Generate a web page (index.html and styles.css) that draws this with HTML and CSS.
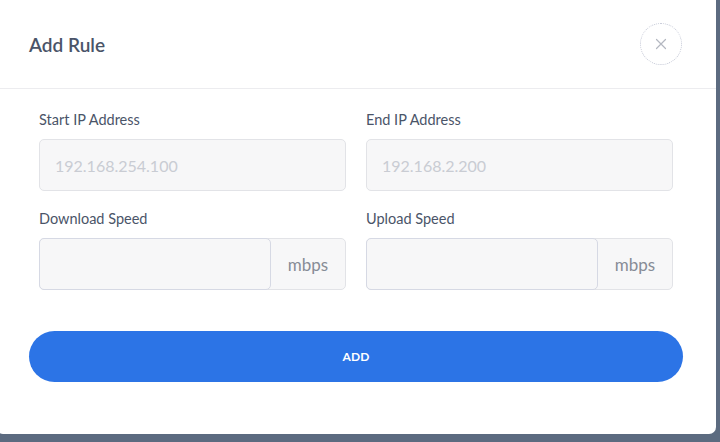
FILE: index.html
```html
<!DOCTYPE html>
<html lang="en">
  <head>
    <title>Add Rule</title>
    <link rel="stylesheet" href="styles.css">
  </head>
  <body>
    <div class="modal">
      <div class="modal-header">
        <h2>Add Rule</h2>
        <button class="close" aria-label="Close">
          <svg width="12" height="12" viewBox="0 0 12 12">
            <path d="M1.5 1.5 L10.5 10.5 M10.5 1.5 L1.5 10.5" stroke="#b3b7c0" stroke-width="1.2" fill="none" stroke-linecap="round"/>
          </svg>
        </button>
      </div>
      <form class="modal-body">
        <div class="fields">
          <div class="field">
            <label>Start IP Address</label>
            <input type="text" placeholder="192.168.254.100">
          </div>
          <div class="field">
            <label>End IP Address</label>
            <input type="text" placeholder="192.168.2.200">
          </div>
          <div class="field">
            <label>Download Speed</label>
            <div class="input-group">
              <input type="text">
              <span class="addon">mbps</span>
            </div>
          </div>
          <div class="field">
            <label>Upload Speed</label>
            <div class="input-group">
              <input type="text">
              <span class="addon">mbps</span>
            </div>
          </div>
        </div>
        <button type="button" class="submit">ADD</button>
      </form>
    </div>
  </body>
</html>
```

FILE: styles.css
```css
body {
  margin: 0;
  background-color: #5c6b80;
  font-family: "Lato", "Open Sans", sans-serif;
  height: 442px;
  overflow: hidden;
}
.modal {
  width: 720px;
  margin: -10px 0 0 -4px; /* dialog sits a little off the top-left */
  background-color: white;
  border-radius: 7px;
}
.modal-header {
  display: flex;
  align-items: center;
  justify-content: space-between;
  height: 99px;
  padding: 10px 33px 0 33px;
  box-sizing: border-box;
  border-bottom: 1px solid #ececef;
}
.modal-header h2 {
  margin: 0;
  font-size: 19px;
  font-weight: 600;
  color: #4a5468;
}
.close {
  width: 42px;
  height: 42px;
  border-radius: 50%;
  border: 1px dotted #c4c8d6;
  background: white;
  display: flex;
  align-items: center;
  justify-content: center;
  padding: 0;
  margin-right: 1px;
}
.modal-body {
  padding: 22px 33px 52px 33px;
}
.fields {
  display: grid;
  grid-template-columns: 1fr 1fr;
  column-gap: 20px;
  row-gap: 19px;
  padding: 0 10px;
}
.field label {
  display: block;
  font-size: 14.5px;
  line-height: 18px;
  color: #4a5468;
  margin-bottom: 10px;
}
.field input {
  width: 100%;
  height: 52px;
  box-sizing: border-box;
  border: 1px solid #e2e3e7;
  border-radius: 5px;
  background-color: #f7f7f8;
  padding: 0 15px;
  font-family: inherit;
  font-size: 16px;
}
.field input::placeholder {
  color: #c9ccd3;
}
.input-group {
  display: flex;
  border: 1px solid #e2e3e7;
  border-radius: 5px;
  background-color: #f7f7f8;
}
.input-group input {
  flex: 1;
  height: 52px;
  border-color: #d6d9e4;
  margin: -1px 0 -1px -1px;
}
.addon {
  width: 74px;
  display: flex;
  align-items: center;
  justify-content: center;
  font-size: 17px;
  color: #878c96;
}
.submit {
  display: block;
  width: 100%;
  height: 51px;
  margin-top: 41px;
  border: none;
  border-radius: 26px;
  background-color: #2c74e6;
  color: white;
  font-family: inherit;
  font-size: 12px;
  font-weight: 700;
  letter-spacing: 0.2px;
}
```
